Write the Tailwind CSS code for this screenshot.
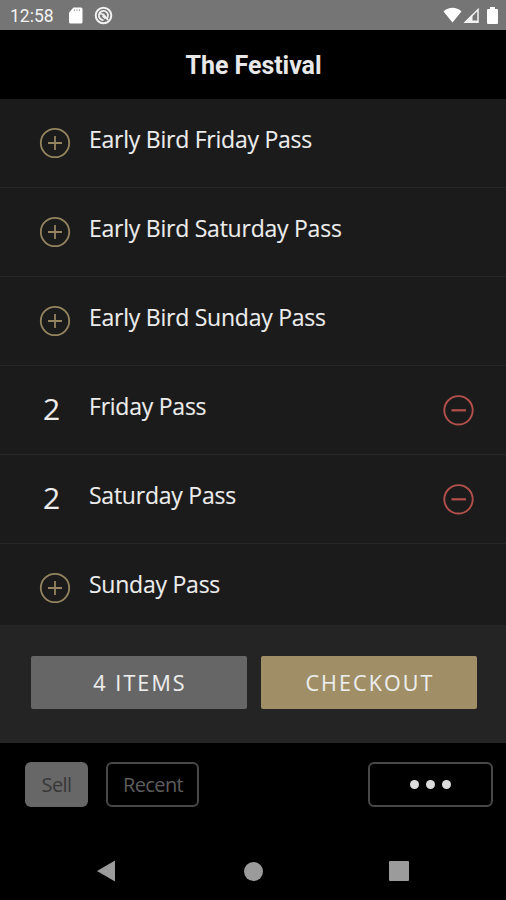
<!DOCTYPE html>
<html lang="en">
<head>
<meta charset="utf-8">
<title>The Festival</title>
<script src="https://cdn.jsdelivr.net/npm/@tailwindcss/browser@4"></script>
</head>
<body class="bg-black">
<svg class="hidden">
  <symbol id="plus" viewBox="0 0 32 32"><circle cx="16" cy="16" r="14.2" fill="none" stroke="currentColor" stroke-width="1.8"/><path d="M16 9v14M9 16h14" stroke="currentColor" stroke-width="1.8"/></symbol>
  <symbol id="minus" viewBox="0 0 32 32"><circle cx="16.5" cy="16.3" r="14.2" fill="none" stroke="currentColor" stroke-width="1.9"/><path d="M9.500 16.300h14.500" stroke="currentColor" stroke-width="2.2"/></symbol>
</svg>
<div class="w-[506px] h-[900px] flex flex-col overflow-hidden bg-black text-[#ededed] font-['Open_Sans',sans-serif]">
  <div class="h-[30px] shrink-0 bg-[#757575] flex items-center pl-[10px] pr-[7px] text-[#f2f2f2]">
    <span class="w-[58px] pt-[3px] font-['Roboto',sans-serif] text-[17.5px] leading-none whitespace-nowrap">12:58</span>
    <svg class="w-[15px] h-[17px] mt-[1px]" viewBox="0 0 15 17"><path d="M5.500 .5H13a1.500 1.500 0 0 1 1.500 1.500v13a1.500 1.500 0 0 1-1.500 1.500H2.500A1.500 1.500 0 0 1 1 15V5.500z" fill="#fff"/><path d="M6.500 2.200v2M9 2.200v2M11.500 2.200v2" stroke="#aaa" stroke-width="1"/></svg>
    <svg class="w-[19px] h-[19px] ml-[11px]" viewBox="0 0 19 19" fill="none" stroke="#f2f2f2"><circle cx="9.500" cy="9.500" r="7.800" stroke-width="2"/><path d="M13.200 12.200A4.600 4.600 0 1 0 9.500 14.100M5.500 7.500l4 1 4.500 5.500M8.500 9.500l3 3" stroke-width="1.800"/></svg>
    <svg class="w-[19px] h-[16px] ml-auto" viewBox="0 0 19 16"><path d="M.5 4.500C5.500-.4 13.500-.4 18.500 4.500L9.500 15.500z" fill="#fff"/></svg>
    <svg class="w-[16px] h-[17px] ml-[1px]" viewBox="0 0 16 17"><path d="M15 2.500V15.300H2.500z" fill="none" stroke="#f2f2f2" stroke-width="1.500"/><path d="M.5 16L9.500 7v6.500H15V16z" fill="#f2f2f2"/></svg>
    <svg class="w-[11px] h-[17px] ml-[8px] mr-[1px]" viewBox="0 0 11 17"><path d="M3 0h5v2h2q1 0 1 1v13q0 1-1 1H1q-1 0-1-1V3q0-1 1-1h2z" fill="#fff"/></svg>
  </div>
  <div class="h-[69px] shrink-0 flex items-center justify-center pt-[3px] pl-[1px] font-['Roboto',sans-serif] font-bold text-[25px] tracking-[-0.05px] text-[#e8e8e8]"><span>The Festival</span></div>
  <div class="h-[526px] shrink-0 overflow-hidden bg-[#1b1b1b] text-[23px] leading-[32px] tracking-[-0.24px] [-webkit-text-stroke:0.1px_#ededed] whitespace-nowrap">
    <div class="h-[89px] border-b border-[#272727] pl-[39px] flex"><svg class="w-8 h-8 mt-[28px] mr-[18px] text-[#94845f]"><use href="#plus"/></svg><div class="mt-[24px]"><span>Early Bird Friday Pass</span></div></div>
    <div class="h-[89px] border-b border-[#272727] pl-[39px] flex"><svg class="w-8 h-8 mt-[28px] mr-[18px] text-[#94845f]"><use href="#plus"/></svg><div class="mt-[24px]"><span>Early Bird Saturday Pass</span></div></div>
    <div class="h-[89px] border-b border-[#272727] pl-[39px] flex"><svg class="w-8 h-8 mt-[28px] mr-[18px] text-[#94845f]"><use href="#plus"/></svg><div class="mt-[24px]"><span>Early Bird Sunday Pass</span></div></div>
    <div class="h-[89px] border-b border-[#272727] pl-[39px] pr-[32px] flex"><div class="w-[50px] pl-1 mt-[27px] text-[30px]"><span>2</span></div><div class="mt-[24px]"><span>Friday Pass</span></div><svg class="w-8 h-8 mt-[28px] ml-auto text-[#b4504c]"><use href="#minus"/></svg></div>
    <div class="h-[89px] border-b border-[#272727] pl-[39px] pr-[32px] flex"><div class="w-[50px] pl-1 mt-[27px] text-[30px]"><span>2</span></div><div class="mt-[24px]"><span>Saturday Pass</span></div><svg class="w-8 h-8 mt-[28px] ml-auto text-[#b4504c]"><use href="#minus"/></svg></div>
    <div class="h-[81px] pl-[39px] flex"><svg class="w-8 h-8 mt-[28px] mr-[18px] text-[#94845f]"><use href="#plus"/></svg><div class="mt-[24px]"><span>Sunday Pass</span></div></div>
  </div>
  <div class="h-[118px] shrink-0 bg-[#242424] flex gap-[14px] pl-[31px] pt-[31px] text-[21.5px] tracking-[2.1px] [-webkit-text-stroke:0.1px_#ededed]">
    <div class="w-[216px] h-[53px] rounded-[2px] bg-[#666] flex items-center justify-center pl-[2px] pt-[2px]"><span>4 ITEMS</span></div>
    <div class="w-[216px] h-[53px] rounded-[2px] bg-[#9f8e66] flex items-center justify-center pl-[2px] pt-[2px]"><span>CHECKOUT</span></div>
  </div>
  <div class="h-[99px] shrink-0 flex pl-[25px] pr-[13px] pt-[19px] text-[20px] tracking-[-0.6px]">
    <div class="w-[63px] h-[45px] rounded-[6px] bg-[#676767] text-[#383838] flex items-center justify-center"><span>Sell</span></div>
    <div class="w-[93px] h-[45px] ml-[18px] rounded-[6px] border-2 border-[#484848] text-[#5d5d5d] flex items-center justify-center pl-[1px]"><span>Recent</span></div>
    <div class="w-[125px] h-[45px] ml-auto rounded-[6px] border-2 border-[#484848] flex items-center justify-center gap-[7px]"><i class="size-[9px] rounded-full bg-[#dcdcdc]"></i><i class="size-[9px] rounded-full bg-[#dcdcdc]"></i><i class="size-[9px] rounded-full bg-[#dcdcdc]"></i></div>
  </div>
  <div class="h-[58px] shrink-0 flex items-center pl-[97px]">
    <svg class="w-[18px] h-[22px]" viewBox="0 0 18 22"><path d="M18 .5v21L0 11z" fill="#9b9b9b"/></svg>
    <div class="size-[19px] ml-[129px] rounded-full bg-[#9b9b9b]"></div>
    <div class="size-[20px] ml-[126px] rounded-[1px] bg-[#9b9b9b]"></div>
  </div>
</div>
</body>
</html>
